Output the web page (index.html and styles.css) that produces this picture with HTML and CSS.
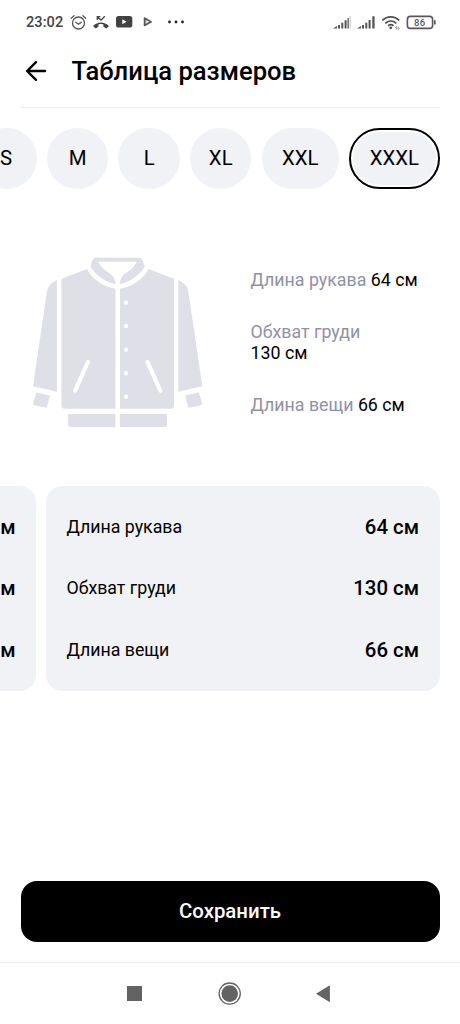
FILE: index.html
```html
<!DOCTYPE html>
<html lang="ru">
<head>
<meta charset="utf-8">
<meta name="viewport" content="width=device-width, initial-scale=1">
<title>Таблица размеров</title>
<link rel="stylesheet" href="styles.css">
</head>
<body>
<div class="screen">
  <div class="status">
    <span class="clock">23:02</span>
    <svg class="status-left" width="120" height="24" viewBox="68 10 120 24">
      <g fill="none" stroke="#555" stroke-width="1.3" stroke-linecap="round">
        <circle cx="78.5" cy="23" r="6"/>
        <path d="M75.7 22.2l2.8 2 2.8-2M71.3 18.2l2.8-2.5M85.7 18.2l-2.8-2.5"/>
      </g>
      <path d="M93 26c4.500-4.800 11.500-4.800 16 0l-2.600 2.400-3-1.700v-2.200c-1.800-.6-3.300-.6-5 0v2.200l-2.800 1.700z" fill="#444"/>
      <path d="M97.300 20v-3.300h3M97.500 16.900l3.500 3.200 3.800-3.800" fill="none" stroke="#444" stroke-width="1.300"/>
      <rect x="116" y="16" width="16.300" height="11.500" rx="2.600" fill="#424242"/>
      <path d="M122.300 19.200v5l4.200-2.500z" fill="#fff"/>
      <path d="M144.500 18v7.500l6.700-3.700z" fill="#aaa" stroke="#555" stroke-width="1.500" stroke-linejoin="round"/>
      <path d="M146.500 20.500v2.600l2.300-1.300z" fill="#fff"/>
      <g fill="#222"><circle cx="169.500" cy="22" r="1.400"/><circle cx="176" cy="22" r="1.400"/><circle cx="182.500" cy="22" r="1.400"/></g>
    </svg>
    <svg class="status-right" width="110" height="24" viewBox="330 10 110 24">
      <g fill="#555">
        <path d="M333 28.500l4-2.500v2.500zM338 25h2v3.500h-2zM341.300 22.700h2v5.800h-2zM344.600 20.300h2v8.200h-2z"/>
        <path d="M347.400 18h1.600v10.500h-1.600z" fill="#777"/><path d="M349.600 16h1.200v12.500h-1.200z" fill="#ccc"/>
        <path d="M357 28.500l4-2.500v2.500zM362 25h2v3.500h-2zM365.300 22.700h2v5.800h-2zM368.600 20h2v8.500h-2zM372.300 16.200h2.300v12.300h-2.300z"/>
      </g>
      <g fill="none" stroke="#505050" stroke-width="1.700">
        <path d="M382.300 20.400c5-4.800 12-4.800 17 0M385.300 23.300c3.300-3 7.700-3 11 0M388.100 25.900c1.600-1.400 3.800-1.400 5.400 0"/>
      </g>
      <circle cx="390.700" cy="27.800" r="1.400" fill="#505050"/>
      <path d="M396.400 29.500v-3m-1.200 1.200l1.200-1.200M398.300 26.500v3m1.200-1.200l-1.200 1.200" stroke="#777" stroke-width=".8" fill="none"/>
      <rect x="407.400" y="16.400" width="25.200" height="12" rx="3" fill="none" stroke="#585858" stroke-width="1.600"/>
      <path d="M434 20.300h1.700v4.300H434z" fill="#585858"/>
      <text class="battery" x="419.800" y="25.900" text-anchor="middle">86</text>
    </svg>
  </div>
  <header class="header">
    <svg width="24" height="24" viewBox="24 59 24 24" fill="none" stroke="#000" stroke-width="2.400" stroke-linecap="round" stroke-linejoin="round"><path d="M45 71H27.300M36 62.200L27.100 71l8.900 8.800"/></svg>
    <h1>Таблица размеров</h1>
  </header>
  <div class="sizes">
    <button class="size">S</button>
    <button class="size">M</button>
    <button class="size">L</button>
    <button class="size">XL</button>
    <button class="size wide">XXL</button>
    <button class="size wide selected">XXXL</button>
  </div>
  <section class="summary">
    <svg class="jacket" width="172" height="172" viewBox="32 256 172 172">
      <g fill="#dfdfe7">
        <path d="M95.500 257.700h44q2 0 2.800 1.800l2.700 7C139 275.500 131 281.500 120 284.300c0-5.500 2-9 7.300-12.300 4-2.500 7-5.500 9.700-10.200H98c2.700 4.700 5.700 7.700 9.700 10.200 5.300 3.300 7.500 6.800 7.500 12.300C104.200 281.500 96.200 275.500 90.400 266.500l2.400-7q.7-1.800 2.700-1.800z"/>
        <path d="M87 269c5 10 15 17 28.400 19.800v120H65q-3.500 0-3.500-3.500v-126.500zM148.500 269c-5 10-15 17-28.500 19.800v120h50.500q3.500 0 3.500-3.500v-126.500z"/>
        <path d="M57 280v111.800l-24-5.500 14-95q1.500-8 10-11.300zM178.300 280v111.800l24-5.500-14-95q-1.500-8-10-11.300z"/>
        <path d="M36.500 392.500l13.500 3-3.200 12.300-12-2.300q-2-.4-1.600-2.400zM198.800 392.500l-13.500 3 3.200 12.300 12-2.300q2-.4 1.600-2.400z"/>
        <path d="M68.200 414h47.200v13H70.200q-2 0-2-2zM119.900 414h47.100v11q0 2-2 2h-45.100z"/>
      </g>
      <path d="M88 362l-12.800 28.500M147.500 362l12.800 28.500" stroke="#fff" stroke-width="4.200" stroke-linecap="round"/>
      <g fill="#fff"><circle cx="126" cy="302.600" r="2.200"/><circle cx="126" cy="326" r="2.200"/><circle cx="126" cy="349.600" r="2.200"/><circle cx="126" cy="373.200" r="2.200"/><circle cx="126" cy="396.800" r="2.200"/></g>
    </svg>
    <div class="measures">
      <p><span>Длина рукава</span> 64 см</p>
      <p><span>Обхват груди</span><br>130 см</p>
      <p><span>Длина вещи</span> 66 см</p>
    </div>
  </section>
  <div class="cards">
    <div class="card previous">
      <div class="row"><b>м</b></div>
      <div class="row"><b>м</b></div>
      <div class="row"><b>м</b></div>
    </div>
    <div class="card">
      <div class="row"><span>Длина рукава</span><b>64 см</b></div>
      <div class="row"><span>Обхват груди</span><b>130 см</b></div>
      <div class="row"><span>Длина вещи</span><b>66 см</b></div>
    </div>
  </div>
  <button class="save">Сохранить</button>
  <nav class="system-nav">
    <svg width="460" height="60" viewBox="0 964 460 60" fill="#636363">
      <path d="M127 986h15v15h-15zM329.900 985.200v17L316 993.700z"/>
      <circle cx="229.700" cy="993.600" r="8.300"/>
      <circle cx="229.700" cy="993.600" r="10.600" fill="none" stroke="#636363" stroke-width="1.300"/>
    </svg>
  </nav>
</div>
</body>
</html>
```
FILE: styles.css
```css
* { box-sizing: border-box; }
body { margin: 0; background: #fff; color: #000; font-family: Roboto, sans-serif; }
button { border: 0; font: inherit; color: inherit; padding: 0; }
svg { display: block; flex: none; }
.screen { width: 460px; height: 1024px; display: flex; flex-direction: column; overflow: hidden; }
.status { height: 44px; padding: 10px 20px 0 26px; display: flex; align-items: flex-start; flex: none; }
.clock { width: 42px; font-size: 14.5px; line-height: 26px; font-weight: 500; color: #444; letter-spacing: .1px; white-space: nowrap; }
.status-right { margin-left: auto; }
.battery { font: 500 9.5px Roboto, sans-serif; fill: #555; letter-spacing: .4px; }
.header { height: 64px; margin: 0 20px; padding: 0 0 9px 4px; display: flex; align-items: center; gap: 23.5px; border-bottom: 1.5px solid #ededf0; flex: none; }
.header h1 { margin: 0; font-size: 25.6px; line-height: 30px; font-weight: 500; white-space: nowrap; }
.sizes { display: flex; gap: 10.2px; margin: 19.5px 0 0 -24.7px; height: 61.500px; flex: none; }
.size { width: 61.400px; height: 61.500px; border-radius: 31px; background: #f1f2f6; font-size: 20.400px; flex: none; }
.wide { width: 77.300px; }
.selected { width: 90.500px; border: 2.500px solid #000; box-shadow: inset 0 0 0 2px #fff; }
.summary { height: 172px; margin: 67px 20px 0 32px; display: flex; gap: 46.500px; flex: none; }
.measures { display: flex; flex-direction: column; justify-content: space-between; padding: 13px 0; flex: 1; white-space: nowrap; }
.measures p { margin: 0; font-size: 17.800px; line-height: 21px; }
.measures span { color: #9191a3; }
.cards { display: flex; gap: 10px; margin: 58px 20.500px 0 0; height: 204.500px; flex: none; }
.card { flex: 1; padding: 20px 20.500px 20.500px; border-radius: 16px; background: #f1f2f6; display: flex; flex-direction: column; justify-content: space-between; }
.previous { flex: 0 0 36px; padding-left: 0; border-radius: 0 16px 16px 0; overflow: hidden; }
.row { height: 41px; display: flex; align-items: center; justify-content: space-between; font-size: 17.750px; white-space: nowrap; }
.row b { font-size: 20.400px; font-weight: 500; }
.previous .row { justify-content: flex-end; }
.save { height: 61.500px; margin: auto 20.500px 20px; border-radius: 16px; background: #000; color: #fff; font-size: 20.400px; font-weight: 500; flex: none; }
.system-nav { height: 62px; border-top: 1px solid #eaeaea; padding-top: 1px; flex: none; }
```
